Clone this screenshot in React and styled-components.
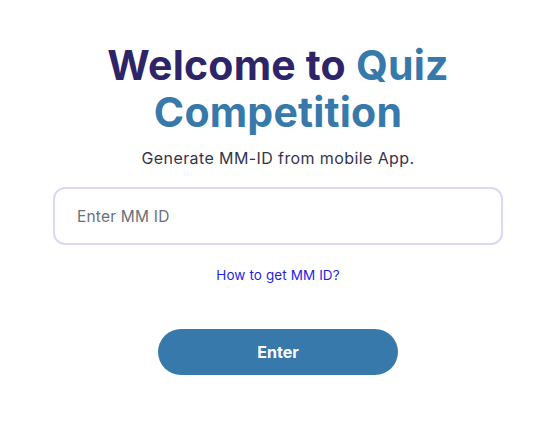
import { createGlobalStyle, styled } from "styled-components";

const GlobalStyle = createGlobalStyle`
  html, body {
    margin: 0;
    padding: 0;
    background: #ffffff;
  }
  body {
    font-family: Inter, "Noto Sans", "Liberation Sans", sans-serif;
  }
`;

const Page = styled.div`
  width: 552px;
  height: 440px;
  display: flex;
  justify-content: center;
  padding: 42px 0 0 4px;
  box-sizing: border-box;
`;

const Card = styled.div`
  width: 450px;
  display: flex;
  flex-direction: column;
  align-items: center;
`;

const Title = styled.h1`
  margin: 0;
  font-size: 41px;
  line-height: 47px;
  font-weight: 700;
  text-align: center;
  color: #2e2468;
  letter-spacing: 0.2px;
`;

const Accent = styled.span`
  color: #3679aa;
`;

const Subtitle = styled.p`
  margin: 11px 0 0;
  font-size: 16px;
  line-height: 22px;
  letter-spacing: 0.4px;
  color: #35344f;
`;

const Input = styled.input`
  margin-top: 18px;
  width: 100%;
  height: 58px;
  box-sizing: border-box;
  border: 2px solid #ddd7f1;
  border-radius: 12px;
  padding: 0 22px;
  font-family: inherit;
  font-size: 15.5px;
  letter-spacing: 0.2px;
  color: #333;
  outline: none;
  &::placeholder {
    color: #6b6f78;
  }
`;

const HelpLink = styled.a`
  margin-top: 21px;
  font-size: 13.5px;
  line-height: 18px;
  letter-spacing: 0.1px;
  color: #1f1fe6;
  text-decoration: none;
  cursor: pointer;
`;

const EnterButton = styled.button`
  margin-top: 45px;
  width: 240px;
  height: 46px;
  border: none;
  border-radius: 23px;
  background: #3679aa;
  color: #ffffff;
  font-family: inherit;
  font-size: 16px;
  font-weight: 700;
  cursor: pointer;
`;

export default function App() {
  return (
    <>
      <GlobalStyle />
      <Page>
        <Card>
          <Title>
            Welcome to <Accent>Quiz</Accent>
            <br />
            <Accent>Competition</Accent>
          </Title>
          <Subtitle>Generate MM-ID from mobile App.</Subtitle>
          <Input placeholder="Enter MM ID" />
          <HelpLink>How to get MM ID?</HelpLink>
          <EnterButton>Enter</EnterButton>
        </Card>
      </Page>
    </>
  );
}
